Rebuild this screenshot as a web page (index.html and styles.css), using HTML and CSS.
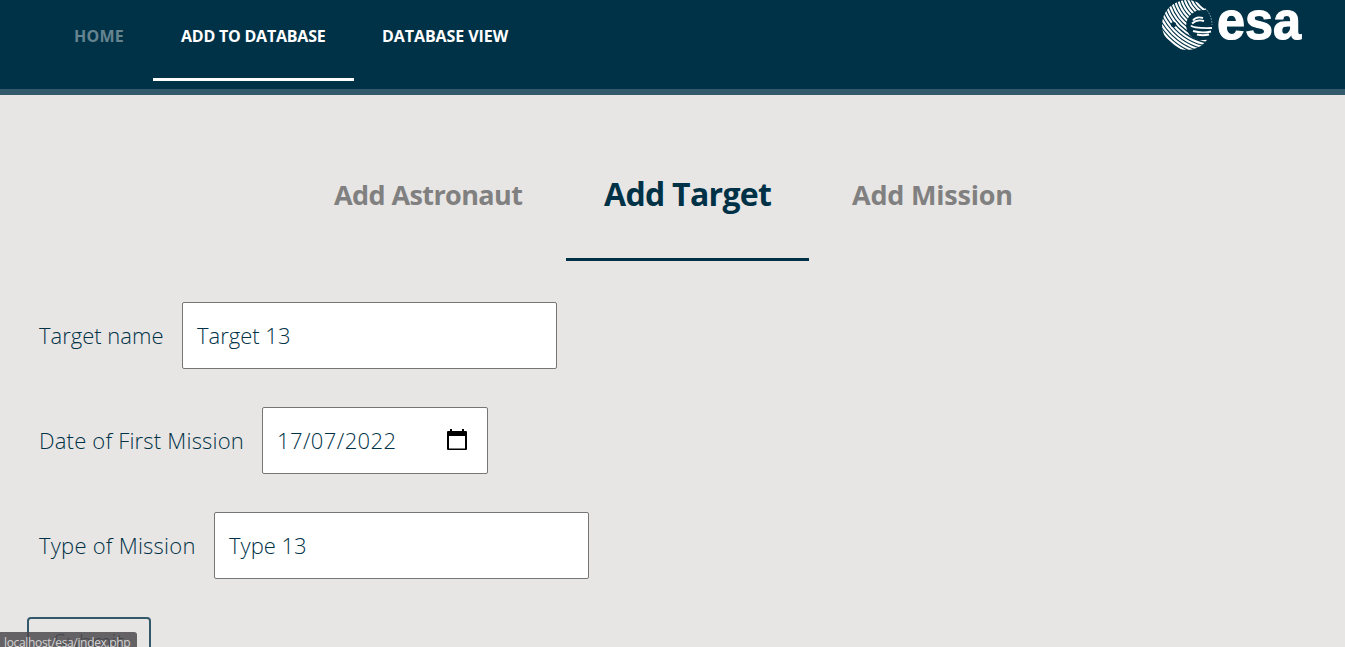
FILE: index.html
```html
<!DOCTYPE html>
<html lang="en">
<head>
<meta charset="utf-8">
<title>Add to database</title>
<link rel="stylesheet" href="styles.css">
</head>
<body>
<header class="topbar">
  <nav class="menu">
    <a class="menu-item muted home"><span>HOME</span></a>
    <a class="menu-item active add"><span>ADD TO DATABASE</span></a>
    <a class="menu-item view"><span>DATABASE VIEW</span></a>
  </nav>
  <svg class="logo" width="142" height="52" viewBox="0 0 142 52">
    <defs>
      <clipPath id="globe"><circle cx="27" cy="25" r="25"/></clipPath>
    </defs>
    <g clip-path="url(#globe)" fill="none" stroke="#fff" stroke-width="2.1">
      <circle cx="56" cy="-10" r="23"/><circle cx="56" cy="-10" r="26.200"/><circle cx="56" cy="-10" r="29.400"/>
      <circle cx="56" cy="-10" r="32.600"/><circle cx="56" cy="-10" r="35.800"/><circle cx="56" cy="-10" r="39"/>
      <circle cx="56" cy="-10" r="42.200"/><circle cx="56" cy="-10" r="45.400"/><circle cx="56" cy="-10" r="48.600"/>
      <circle cx="56" cy="-10" r="51.800"/><circle cx="56" cy="-10" r="55"/><circle cx="56" cy="-10" r="58.200"/>
      <circle cx="56" cy="-10" r="61.400"/><circle cx="56" cy="-10" r="64.600"/><circle cx="56" cy="-10" r="67.800"/>
    </g>
    <circle cx="13.500" cy="24.500" r="2.600" fill="#003247"/>
    <path d="M55 10H45Q40 10 36 11Q26 16 26 26Q27 37 38 40Q45 41 55 37Z" fill="#003247"/>
    <g fill="none" stroke="#fff">
      <path d="M33 20.500Q36 16 43 18M32 23.500Q37 19 44 21" stroke-width="1.900"/>
      <path d="M31 25.500Q33 28.500 52 28M33 31Q42 33.500 51 31.500M37 34.500Q43 36 49 34.500" stroke-width="1.900"/>
      <path d="M45 8Q52 15 52 25" stroke-width="1" stroke-dasharray="1.500 1.500" opacity=".6"/>
    </g>
    <text class="wordmark" x="57" y="39" textLength="84" lengthAdjust="spacingAndGlyphs">esa</text>
  </svg>
</header>
<main>
  <nav class="tabs">
    <a class="tab astronaut"><span>Add Astronaut</span></a>
    <a class="tab current"><span>Add Target</span></a>
    <a class="tab mission"><span>Add Mission</span></a>
  </nav>
  <form class="form">
    <div class="row"><label class="label l-name"><span>Target name</span></label><div class="field wide"><span>Target 13</span></div></div>
    <div class="row"><label class="label l-date"><span>Date of First Mission</span></label><div class="field date"><span>17/07/2022</span>
      <svg class="calendar" width="20" height="22" viewBox="0 0 20 22"><path d="M3 0h2v2h10V0h2v2h2q1 0 1 1v17q0 1-1 1H1q-1 0-1-1V3q0-1 1-1h2zM2 7v12.500h16V7z" fill="#000" fill-rule="evenodd"/></svg></div></div>
    <div class="row"><label class="label l-type"><span>Type of Mission</span></label><div class="field wide"><span>Type 13</span></div></div>
    <div class="submit">Submit</div>
  </form>
</main>
<div class="status">localhost/esa/index.php</div>
</body>
</html>
```
FILE: styles.css
```css
* { box-sizing: border-box; }
body {
  margin: 0;
  height: 647px;
  overflow: hidden;
  background: #e8e6e4;
  color: #003247;
  font-family: "Open Sans", "Noto Sans", sans-serif;
  white-space: nowrap;
}
.topbar {
  display: flex;
  justify-content: space-between;
  height: 95px;
  padding: 0 43px 0 47px;
  background: #003247;
  border-bottom: 6px solid #335a6b;
}
.menu { display: flex; }
.menu-item {
  height: 81px;
  padding: 0 28px;
  color: #fff;
  font-size: 16px;
  font-weight: 700;
  line-height: 72px;
  letter-spacing: -0.22px;
}
.menu-item.muted { color: #668490; }
.menu-item.active { border-bottom: 3px solid #fff; }
.home { width: 106px; padding-left: 27px; letter-spacing: 0.25px; }
.add { width: 201px; }
.view { letter-spacing: -0.07px; }
.logo { overflow: visible; }
.wordmark {
  fill: #fff;
  stroke: #fff;
  stroke-width: 1.2px;
  font: 700 54px "Liberation Sans", sans-serif;
}
.tabs {
  display: flex;
  height: 166px;
  padding: 65px 0 0 296px;
}
.tab {
  padding: 0 38px;
  color: #808080;
  font-size: 27px;
  font-weight: 700;
  line-height: 70px;
  letter-spacing: -0.3px;
}
.astronaut { width: 270px; letter-spacing: -0.6px; }
.current {
  width: 243px;
  color: #003247;
  font-size: 32px;
  line-height: 68px;
  letter-spacing: -0.7px;
  border-bottom: 3px solid #003247;
}
.mission { padding-left: 43px; letter-spacing: -0.2px; }
.form {
  display: flex;
  flex-direction: column;
  gap: 38px;
  padding: 41px 0 0 27px;
}
.row { display: flex; height: 67px; }
.label, .field { font-size: 22px; font-weight: 300; line-height: 66px; }
.label { padding-left: 12px; }
.l-name { width: 155px; }
.l-date { width: 235px; letter-spacing: 0.2px; }
.l-type { width: 187px; letter-spacing: 0.24px; }
.field {
  display: flex;
  align-items: flex-start;
  justify-content: space-between;
  padding: 0 20px 0 14px;
  background: #fff;
  border: 1px solid #767676;
  border-radius: 2px;
  line-height: 64px;
}
.wide { width: 375px; }
.date { width: 226px; letter-spacing: 0.4px; }
.calendar { margin-top: 21px; }
.submit {
  width: 124px;
  height: 60px;
  border: 2px solid #335a6b;
  border-radius: 4px;
  text-align: center;
  font-size: 22px;
  font-weight: 300;
  line-height: 44px;
}
.status {
  position: absolute;
  left: 0;
  bottom: 0;
  width: 137px;
  height: 15px;
  padding-left: 4px;
  background: rgba(78, 74, 79, 0.85);
  border-radius: 0 3px 0 0;
  color: #d4d4d4;
  font-size: 12px;
  letter-spacing: -0.34px;
  line-height: 22px;
  overflow: hidden;
}
```
